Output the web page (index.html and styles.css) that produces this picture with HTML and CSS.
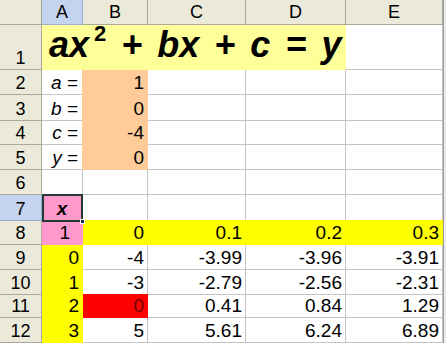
FILE: index.html
```html
<!DOCTYPE html>
<html>
<head>
<meta charset="utf-8">
<link rel="stylesheet" href="styles.css">
</head>
<body>
<div class="sheet">
  <div class="hd corner"></div>
  <div class="hd col selh">A</div>
  <div class="hd col">B</div>
  <div class="hd col">C</div>
  <div class="hd col">D</div>
  <div class="hd col">E</div>

  <div class="hd row r1">1</div>
  <div class="c merged"><span class="eq">ax<sup>2</sup> + bx + c = y</span></div>
  <div class="c"></div>

  <div class="hd row">2</div>
  <div class="c lbl"><i>a</i>&nbsp;=</div>
  <div class="c peach num">1</div>
  <div class="c"></div><div class="c"></div><div class="c"></div>

  <div class="hd row">3</div>
  <div class="c lbl"><i>b</i>&nbsp;=</div>
  <div class="c peach num">0</div>
  <div class="c"></div><div class="c"></div><div class="c"></div>

  <div class="hd row">4</div>
  <div class="c lbl"><i>c</i>&nbsp;=</div>
  <div class="c peach num">-4</div>
  <div class="c"></div><div class="c"></div><div class="c"></div>

  <div class="hd row">5</div>
  <div class="c lbl"><i>y</i>&nbsp;=</div>
  <div class="c peach num">0</div>
  <div class="c"></div><div class="c"></div><div class="c"></div>

  <div class="hd row">6</div>
  <div class="c"></div><div class="c"></div><div class="c"></div><div class="c"></div><div class="c"></div>

  <div class="hd row selh">7</div>
  <div class="c pink sel center"><b><i>x</i></b></div>
  <div class="c"></div><div class="c"></div><div class="c"></div><div class="c"></div>

  <div class="hd row">8</div>
  <div class="c pink num a8">1</div>
  <div class="c yel num top">0</div>
  <div class="c yel num top">0.1</div>
  <div class="c yel num top">0.2</div>
  <div class="c yel num top">0.3</div>

  <div class="hd row">9</div>
  <div class="c yelA num">0</div>
  <div class="c num">-4</div>
  <div class="c num">-3.99</div>
  <div class="c num">-3.96</div>
  <div class="c num">-3.91</div>

  <div class="hd row">10</div>
  <div class="c yelA num">1</div>
  <div class="c num">-3</div>
  <div class="c num">-2.79</div>
  <div class="c num">-2.56</div>
  <div class="c num">-2.31</div>

  <div class="hd row">11</div>
  <div class="c yelA num">2</div>
  <div class="c red num">0</div>
  <div class="c num">0.41</div>
  <div class="c num">0.84</div>
  <div class="c num">1.29</div>

  <div class="hd row">12</div>
  <div class="c yelA num">3</div>
  <div class="c num">5</div>
  <div class="c num">5.61</div>
  <div class="c num">6.24</div>
  <div class="c num">6.89</div>
</div>
</body>
</html>
```
FILE: styles.css
```css
html, body {
  margin: 0;
  padding: 0;
}
body {
  background: #ececec;
  font-family: "Liberation Sans", Arial, sans-serif;
  width: 446px;
  height: 343px;
  overflow: hidden;
}
.sheet {
  display: grid;
  grid-template-columns: 42px 41px 65px 98px 100px 97px;
  grid-template-rows: 25px 45px 25px 26px 24px 25px 25px 26px 24px 25px 25px 23px 25px;
  width: 443px;
  background: #fff;
  border-right: 1px solid #9a9a9a;
}
.hd {
  box-sizing: border-box;
  background: #ebe9d9;
  border-right: 1px solid #aca899;
  border-bottom: 1px solid #aca899;
  color: #000;
  font-size: 18px;
  display: flex;
  justify-content: center;
}
.col {
  align-items: center;
  padding-top: 1px;
}
.row {
  align-items: flex-end;
  line-height: 18px;
  padding-bottom: 2px;
}
.selh {
  background: #c4d4ee;
  border-color: #98b0d2;
}
.c {
  box-sizing: border-box;
  border-right: 1px solid #c4c4c4;
  border-bottom: 1px solid #c4c4c4;
  font-size: 19px;
  line-height: 19px;
  display: flex;
  align-items: flex-end;
  padding-bottom: 2px;
  color: #000;
}
.merged {
  grid-column: 2 / 6;
  background: #ffff99;
  border-color: #ffff99;
  padding: 0 0 6px 7px;
}
.eq {
  font-weight: bold;
  font-style: italic;
  font-size: 36px;
  line-height: 36px;
  white-space: pre;
  word-spacing: 5px;
}
.eq sup {
  font-size: 22px;
  font-style: normal;
  line-height: 0;
  vertical-align: 16px;
  margin-left: 5px;
}
.num {
  justify-content: flex-end;
  padding-right: 3px;
}
.lbl {
  justify-content: flex-end;
  padding-right: 4px;
}
.center {
  justify-content: center;
}
.peach {
  background: #ffcc99;
  border-color: #ffcc99;
  box-shadow: -1px 0 0 0 #ffcc99;
}
.pink {
  background: #ff99cc;
  border-color: #ff99cc;
}
.a8 {
  padding-right: 12px;
}
.yel {
  background: #ffff00;
  border-color: #ffff00;
}
.top {
  box-shadow: 0 -1px 0 0 #ffff00;
}
.yelA {
  background: #ffff00;
  border-color: #ffff00;
}
.red {
  background: #ff0000;
  border-color: #ff0000;
  box-shadow: 0 -1px 0 0 #ff0000;
  color: #6a0000;
}
.sel {
  position: relative;
}
.sel::before {
  content: "";
  position: absolute;
  left: 0;
  top: -1px;
  right: -1px;
  bottom: -2px;
  border: 2px solid #233a33;
}
.sel::after {
  content: "";
  position: absolute;
  right: -3px;
  bottom: -4px;
  width: 5px;
  height: 5px;
  background: #1c2f4a;
  border: 1px solid #fff;
  box-sizing: border-box;
}
```
